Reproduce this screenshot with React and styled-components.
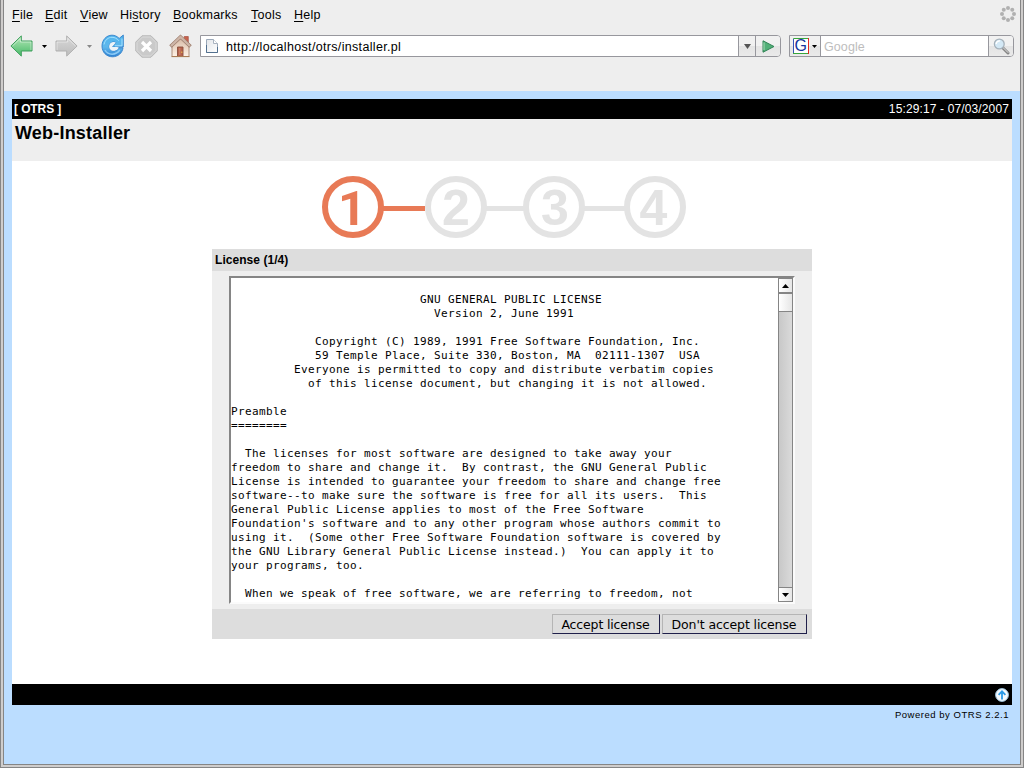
import React from 'react';
import styled, { createGlobalStyle } from 'styled-components';

const Global = createGlobalStyle`
  * { box-sizing: border-box; }
  html, body { margin: 0; padding: 0; overflow: hidden; }
  body { font-family: "Liberation Sans", Arial, sans-serif; font-size: 12px; color: #000; }
  svg { display: block; flex: none; }
`;

const Frame = styled.div`
  width: 1024px;
  height: 768px;
  border: 1px solid #858585;
  border-top: 0;
  padding: 0 2px 2px;
  background: #cfcdcc;
`;
const Window = styled.div`
  height: 765px;
  border: 1px solid #858585;
  border-top: 0;
  background: #bbddff;
  display: flex;
  flex-direction: column;
`;
const Chrome = styled.header`
  height: 91px;
  flex: none;
  background: #eeeeee;
`;
const MenuBar = styled.nav`
  height: 30px;
  padding: 0 4px 0 8px;
  display: flex;
  align-items: center;
`;
const MenuItem = styled.span`
  width: ${(p) => p.$w}px;
  font-size: 12.5px;
  line-height: 16px;
  letter-spacing: 0.25px;
  white-space: nowrap;
  u { text-underline-offset: 2px; text-decoration-thickness: 1px; }
`;
const Throbber = styled.span`
  margin-left: auto;
  margin-top: -2px;
`;
const ToolBar = styled.div`
  height: 32px;
  padding: 0 6px 0 6px;
  display: flex;
  align-items: center;
`;
const Tool = styled.span`
  width: ${(p) => p.$w}px;
  flex: none;
`;
const Field = styled.div`
  width: ${(p) => p.$w}px;
  height: 22px;
  flex: none;
  margin-left: ${(p) => p.$gap || 0}px;
  border: 1px solid #97979d;
  border-radius: 0 4px 4px 0;
  background: #fff;
  display: flex;
  overflow: hidden;
`;
const FieldText = styled.span`
  flex: 1;
  display: flex;
  align-items: center;
  padding-top: 1px;
  padding-left: ${(p) => p.$pad}px;
  font-size: 12.5px;
  letter-spacing: ${(p) => p.$ls}px;
  color: ${(p) => p.$color || '#000'};
  svg { margin: -1px 8px 0 0; }
`;
const FieldButton = styled.span`
  width: ${(p) => p.$w}px;
  border-${(p) => p.$edge || 'left'}: 1px solid #97979d;
  background: linear-gradient(#f1f1f1 0 48%, #e4e4e4 52%, #eaeaea);
  display: flex;
  align-items: center;
  justify-content: center;
  gap: 3px;
`;

const Page = styled.main`
  margin: 8px 8px 0;
  display: flex;
  flex-direction: column;
`;
const Bar = styled.div`
  height: ${(p) => p.$h}px;
  padding: 0 3px 0 2px;
  background: #000;
  color: #fff;
  display: flex;
  align-items: center;
  justify-content: space-between;
  line-height: 14px;
`;
const Brand = styled.b`
  letter-spacing: -0.1px;
`;
const Clock = styled.span`
  letter-spacing: 0.13px;
`;
const Title = styled.h1`
  height: 42px;
  margin: 0;
  padding: 4px 3px;
  background: #eeeeee;
  font-size: 18px;
  line-height: 20px;
  letter-spacing: 0.2px;
`;
const Content = styled.section`
  height: 523px;
  padding: 14px 200px 0;
  background: #fff;
`;
const Steps = styled.svg`
  margin-left: 109px;
`;
const Digit = styled.text`
  font: bold ${(p) => p.$font};
  text-anchor: middle;
`;
const Panel = styled.div`
  width: 600px;
  margin-top: 10px;
`;
const PanelHead = styled.h2`
  margin: 0;
  height: 22px;
  padding-left: 3px;
  background: #dddddd;
  font-size: 12px;
  line-height: 22px;
  letter-spacing: 0.05px;
`;
const PanelBody = styled.div`
  height: 338px;
  padding: 5px 17px 0;
  background: #eeeeee;
`;
const TextBox = styled.div`
  height: 328px;
  border: 2px solid;
  border-color: #858585 #fbfbfb #fbfbfb #858585;
  background: #fff;
  display: flex;
`;
const License = styled.pre`
  flex: 1;
  height: 324px;
  margin: 0;
  padding-top: 1px;
  overflow: hidden;
  font: 11px/14px "DejaVu Sans Mono", monospace;
  letter-spacing: 0.3775px;
`;
const ScrollBar = styled.div`
  width: 15px;
  display: flex;
  flex-direction: column;
  border: 1px solid #858585;
  background: linear-gradient(90deg, #c8c8c8, #dadada);
`;
const ScrollPart = styled.div`
  height: ${(p) => p.$h}px;
  background: linear-gradient(90deg, #fff, #e6e6e6);
  border: 0 solid #858585;
  border-${(p) => p.$line}-width: ${(p) => p.$lw || 1}px;
  margin-top: ${(p) => (p.$last ? 'auto' : 0)};
  display: flex;
  align-items: center;
  justify-content: center;
`;
const PanelFoot = styled.div`
  height: 30px;
  padding: 5px 5px 0 0;
  background: #dddddd;
  display: flex;
  justify-content: flex-end;
  gap: 2px;
`;
const Button = styled.button`
  width: ${(p) => p.$w}px;
  height: 20px;
  padding: 1px 1px 0 0;
  border: 1px solid;
  border-color: #b5b5b5 #20204a #20204a #b5b5b5;
  border-radius: 0;
  background: #dddddd;
  color: #000;
  font: 12.5px/17px "DejaVu Sans", sans-serif;
  letter-spacing: ${(p) => p.$ls}px;
  white-space: nowrap;
`;
const Powered = styled.footer`
  margin-top: 4px;
  padding-right: 3px;
  text-align: right;
  font-size: 9.5px;
  line-height: 12px;
  letter-spacing: 0.53px;
`;

const Caret = ({ color = '#000', w = 5, h = 3 }) => (
  <svg width={w} height={h} viewBox="0 0 10 6" preserveAspectRatio="none"><path d="M0 0H10L5 6Z" fill={color} /></svg>
);

const ArrowIcon = ({ flip, id, light, dark, edge }) => (
  <svg width="23" height="22" viewBox="0 0 23 22">
    <defs>
      <linearGradient id={id} x1="0" y1="0" x2="0" y2="1">
        <stop offset="0" stopColor={light} /><stop offset="1" stopColor={dark} />
      </linearGradient>
    </defs>
    <g transform={flip ? 'translate(23 0) scale(-1 1)' : undefined}>
      <path d="M.9 11 11.3.9V6H22V16H11.3V21.1Z" fill={`url(#${id})`} stroke={edge} />
      <path d="M2.5 11 10.3 3.4V7H21V15" fill="none" stroke="#fff" strokeOpacity=".45" />
    </g>
  </svg>
);

const ReloadIcon = () => (
  <svg width="23" height="24" viewBox="0 0 23 24">
    <defs>
      <linearGradient id="reload" x1="0" y1="0" x2="0" y2="1">
        <stop offset="0" stopColor="#52b6ed" /><stop offset=".55" stopColor="#5fb7ec" /><stop offset="1" stopColor="#2d7fd0" />
      </linearGradient>
    </defs>
    <path d="M18.2 4.4 22.3 1V13H11L14.8 8.6C12.5 7.2 9.2 8.4 8.4 11 7.4 14.8 10.5 17.3 13.5 16.8 15.6 16.4 17 15.2 17.6 13.8H22C21.3 19.3 16.8 22.8 11.5 22.8 5.5 22.8 1 18.2 1 12 1 6 5.4 1.2 11 1.2 13.6 1.2 16 2.2 18.2 4.4Z" fill="url(#reload)" stroke="#3180cb" strokeWidth=".9" />
    <path d="M14.8 8.6C12.5 7.2 9.2 8.4 8.4 11 7.4 14.8 10.5 17.3 13.5 16.8 15.6 16.4 17 15.2 17.6 13.8L16 13H11Z" fill="#eef4f8" />
    <path d="M3 10.5C4 5.8 7.4 3.3 11 3.3 13.8 3.3 16 4.6 17.9 6.8M21 4.5V11.8H14" fill="none" stroke="#a5e0ff" strokeWidth="1" />
    <path d="M4 16C7 21.5 15 21.5 18.8 16" fill="none" stroke="#8bcbf7" strokeWidth="1.5" />
  </svg>
);

const StopIcon = () => (
  <svg width="23" height="23" viewBox="0 0 23 23">
    <path d="M7 .8H16L22.2 7V16L16 22.2H7L.8 16V7Z" fill="#cacaca" stroke="#b7b7b7" />
    <path d="M7.5 2H15.5L21 7.5V15.5L15.5 21H7.5L2 15.5V7.5Z" fill="none" stroke="#d9d9d9" />
    <path d="M7 7 16 16M16 7 7 16" stroke="#fff" strokeWidth="3.2" />
  </svg>
);

const HomeIcon = () => (
  <svg width="23" height="24" viewBox="0 0 23 24">
    <defs>
      <linearGradient id="wall" x1="0" y1="0" x2="0" y2="1">
        <stop offset="0" stopColor="#d5b8a3" /><stop offset="1" stopColor="#fff2e6" />
      </linearGradient>
    </defs>
    <path d="M15.2 2.5H19.3V9L15.2 5Z" fill="#c8614c" stroke="#a65342" strokeWidth=".7" />
    <path d="M3 11.5 11.5 3.5 20 11.5V22.5H3Z" fill="url(#wall)" stroke="#a58570" strokeWidth=".9" />
    <path d="M1.5 12.5 11.5 3 21.5 12.5" fill="none" stroke="#9b7b6a" strokeWidth="3.6" />
    <path d="M2 12 11.5 3 21 12" fill="none" stroke="#cdb5a7" strokeWidth="2.4" />
    <path d="M8.5 22V13H14V22" fill="#b5624c" stroke="#8a4f3c" strokeWidth=".9" />
    <path d="M10.8 14V21" stroke="#d08a72" />
    <path d="M12.8 17.5V19" stroke="#edc04d" />
    <path d="M2.5 22.6H20.5" stroke="#a97b52" />
  </svg>
);

const PageIcon = () => (
  <svg width="12" height="14" viewBox="0 0 12 14">
    <defs>
      <linearGradient id="sheet" x1="0" y1="0" x2="1" y2="1">
        <stop offset="0" stopColor="#e2e5e9" /><stop offset="1" stopColor="#fff" />
      </linearGradient>
    </defs>
    <path d="M.5.5H7.5L11.5 4.5V13.5H.5Z" fill="url(#sheet)" stroke="#9ba8b8" />
    <path d="M7.5.5V4.5H11.5" fill="#fff" stroke="#a9b3c0" />
    <path d="M.5 6V13.5H11.5V8" fill="none" stroke="#52708f" />
  </svg>
);

const GoIcon = () => (
  <svg width="13" height="13" viewBox="0 0 13 13">
    <path d="M1 .8 12 6.5 1 12.2Z" fill="#52b078" stroke="#318456" />
    <path d="M2 2.4V10" stroke="#a8dcb9" />
  </svg>
);

const EngineIcon = () => (
  <svg width="16" height="16" viewBox="0 0 16 16">
    <rect width="16" height="16" fill="#fff" />
    <path d="M.5 15V.5H15" fill="none" stroke="#38a63c" />
    <path d="M.5 1V15" stroke="#3655b8" />
    <path d="M15.5 0V16" stroke="#e32a22" />
    <path d="M0 15.5H15" stroke="#38a63c" />
    <text x="7.8" y="13.4" textAnchor="middle" fontSize="16" fontFamily="Liberation Sans, Arial, sans-serif" fill="#16349c">G</text>
  </svg>
);

const SearchIcon = () => (
  <svg width="17" height="17" viewBox="0 0 17 17">
    <path d="M9.5 9.5 15 15" stroke="#868686" strokeWidth="3" strokeLinecap="round" />
    <path d="M10 9.5 15 14.5" stroke="#e4e4e4" strokeWidth="1" strokeLinecap="round" />
    <circle cx="6.3" cy="6" r="4.9" fill="#d3e8f5" stroke="#a6b2bb" strokeWidth="1.3" />
    <path d="M3 6C3.5 3.7 5.3 2.8 7 3" fill="none" stroke="#fff" strokeWidth="1.3" />
  </svg>
);

const UpIcon = () => (
  <svg width="14" height="14" viewBox="0 0 14 14">
    <circle cx="7" cy="7" r="6.4" fill="#f3faff" stroke="#9dc5df" />
    <path d="M7 11.5V3.5M3.6 6.8 7 3.3 10.4 6.8" fill="none" stroke="#2b9be8" strokeWidth="1.8" />
  </svg>
);

const MENU = [
  ['', 'F', 'ile', 33], ['', 'E', 'dit', 35], ['', 'V', 'iew', 40], ['Hi', 's', 'tory', 53],
  ['', 'B', 'ookmarks', 78], ['', 'T', 'ools', 43], ['', 'H', 'elp', 40],
];

const HELVETICA = '50px "Liberation Sans", Arial, sans-serif';
const STEPS = [
  { cx: 32, x: 31, font: '49px Roboto, sans-serif', color: '#e87a56' },
  { cx: 135, x: 135, font: HELVETICA, color: '#e3e3e3' },
  { cx: 233, x: 234, font: HELVETICA, color: '#e3e3e3' },
  { cx: 334, x: 332.5, font: HELVETICA, color: '#e3e3e3' },
];

const LICENSE = `
                           GNU GENERAL PUBLIC LICENSE
                             Version 2, June 1991

            Copyright (C) 1989, 1991 Free Software Foundation, Inc.
            59 Temple Place, Suite 330, Boston, MA  02111-1307  USA
         Everyone is permitted to copy and distribute verbatim copies
           of this license document, but changing it is not allowed.

Preamble
========

  The licenses for most software are designed to take away your
freedom to share and change it.  By contrast, the GNU General Public
License is intended to guarantee your freedom to share and change free
software--to make sure the software is free for all its users.  This
General Public License applies to most of the Free Software
Foundation's software and to any other program whose authors commit to
using it.  (Some other Free Software Foundation software is covered by
the GNU Library General Public License instead.)  You can apply it to
your programs, too.

  When we speak of free software, we are referring to freedom, not`;

export default function App() {
  return (
    <Frame>
      <Global />
      <Window>
        <Chrome>
          <MenuBar>
            {MENU.map(([pre, key, post, w]) => (
              <MenuItem key={post} $w={w}>{pre}<u>{key}</u>{post}</MenuItem>
            ))}
            <Throbber>
              <svg width="16" height="16" viewBox="0 0 16 16" fill="#b0b0b0">
                {[0, 1, 2, 3, 4, 5, 6, 7].map((i) => (
                  <circle key={i} cx={8 + 6 * Math.cos((i * Math.PI) / 4)} cy={8 + 6 * Math.sin((i * Math.PI) / 4)} r="2" />
                ))}
              </svg>
            </Throbber>
          </MenuBar>
          <ToolBar>
            <Tool $w={32}><ArrowIcon id="back" light="#b5e8b8" dark="#47b968" edge="#3e9f5c" /></Tool>
            <Tool $w={13}><Caret /></Tool>
            <Tool $w={32}><ArrowIcon id="fwd" flip light="#d8d8d8" dark="#bcbcbc" edge="#b0b0b0" /></Tool>
            <Tool $w={14}><Caret color="#888" /></Tool>
            <Tool $w={34}><ReloadIcon /></Tool>
            <Tool $w={34}><StopIcon /></Tool>
            <Tool $w={31}><HomeIcon /></Tool>
            <Field $w={581}>
              <FieldText $pad={5} $ls={0.33}><PageIcon />http://localhost/otrs/installer.pl</FieldText>
              <FieldButton $w={17}><Caret color="#555" w={7} h={5} /></FieldButton>
              <FieldButton $w={25}><GoIcon /></FieldButton>
            </Field>
            <Field $w={225} $gap={8}>
              <FieldButton $w={31} $edge="right"><EngineIcon /><Caret /></FieldButton>
              <FieldText $pad={3} $ls={0.1} $color="#bdbdbd">Google</FieldText>
              <FieldButton $w={25}><SearchIcon /></FieldButton>
            </Field>
          </ToolBar>
        </Chrome>
        <Page>
          <Bar $h={20}><Brand>[ OTRS ]</Brand><Clock>15:29:17 - 07/03/2007</Clock></Bar>
          <Title>Web-Installer</Title>
          <Content>
            <Steps width="366" height="64" viewBox="0 0 366 64">
              <path d="M62 33.5H104" stroke="#e87a56" strokeWidth="5" />
              <path d="M164 33.5H204M262 33.5H305" stroke="#e3e3e3" strokeWidth="5" />
              {STEPS.map(({ cx, x, font, color }, i) => (
                <g key={cx}>
                  <circle cx={cx} cy="32" r="28" fill="#fff" stroke={color} strokeWidth="6" />
                  <Digit x={x} y="50" $font={font} fill={color}>{i + 1}</Digit>
                </g>
              ))}
            </Steps>
            <Panel>
              <PanelHead>License (1/4)</PanelHead>
              <PanelBody>
                <TextBox>
                  <License>{LICENSE}</License>
                  <ScrollBar>
                    <ScrollPart $h={15} $line="bottom" $lw={2}>
                      <svg width="7" height="4" viewBox="0 0 7 4"><path d="M0 4 3.5 0 7 4Z" /></svg>
                    </ScrollPart>
                    <ScrollPart $h={18} $line="bottom" />
                    <ScrollPart $h={14} $line="top" $last><Caret w={7} h={4} /></ScrollPart>
                  </ScrollBar>
                </TextBox>
              </PanelBody>
              <PanelFoot>
                <Button $w={108} $ls={-0.15}>Accept license</Button>
                <Button $w={145} $ls={-0.11}>Don't accept license</Button>
              </PanelFoot>
            </Panel>
          </Content>
          <Bar $h={21}><span /><UpIcon /></Bar>
          <Powered>Powered by OTRS 2.2.1</Powered>
        </Page>
      </Window>
    </Frame>
  );
}
